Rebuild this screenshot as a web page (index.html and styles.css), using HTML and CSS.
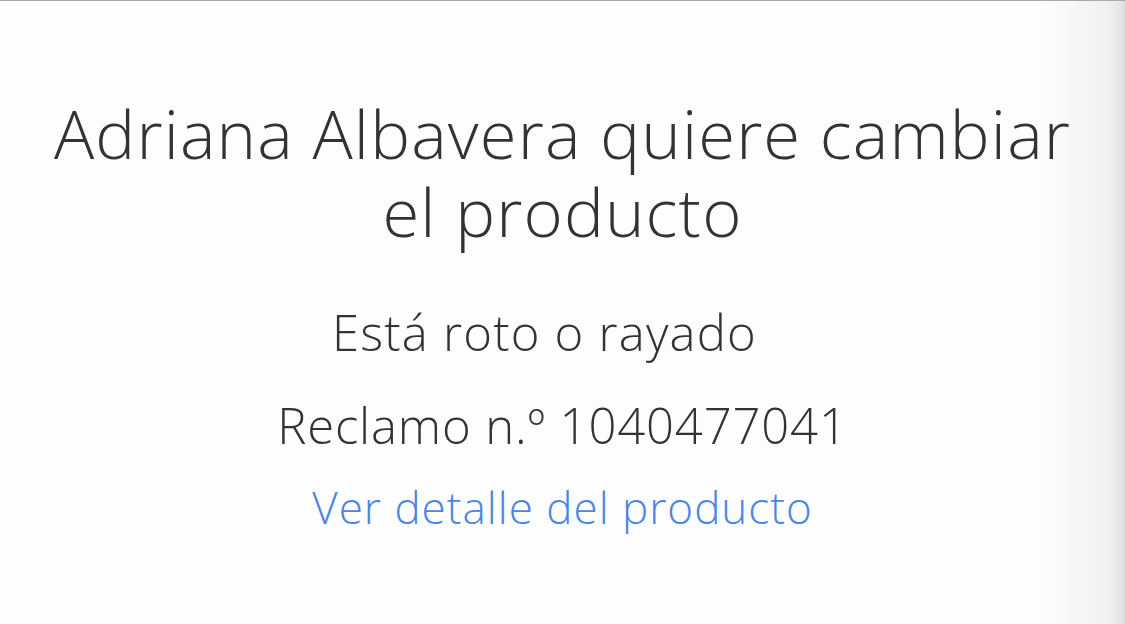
FILE: index.html
```html
<!DOCTYPE html>
<html lang="es">
<head>
    <meta charset="UTF-8">
    <meta name="viewport" content="width=device-width, initial-scale=1.0">
    <title>Cambio de producto</title>
    <link rel="stylesheet" href="styles.css">
</head>
<body>
    <div class="container">
        <h1 class="title">Adriana Albavera quiere cambiar el producto</h1>
        <p class="reason">Está roto o rayado</p>
        <p class="claim">Reclamo n.º 1040477041</p>
        <a class="detail-link" href="#">Ver detalle del producto</a>
    </div>
</body>
</html>
```

FILE: styles.css
```css
/* General Reset */
* {
    margin: 0;
    padding: 0;
    box-sizing: border-box;
}

body {
    font-family: "Open Sans", Lato, sans-serif;
    font-weight: 300;
    color: #333333;
    height: 100vh;
    overflow: hidden;
    border-top: 1px solid #a9a9a9;
    /* soft shade along the right edge */
    background: linear-gradient(to right, #fdfdfd 0%, #fdfdfd 92.5%, #f1f1f1 98.5%, #e4e4e4 99.6%, #dcdcdc 100%);
}

.container {
    display: flex;
    flex-direction: column;
    align-items: center;
    text-align: center;
    padding-top: 93px;
}

.title {
    font-size: 67px;
    font-weight: 300;
    line-height: 78px;
    letter-spacing: 1.15px;
    width: 1045px;
}

.reason {
    font-size: 49px;
    line-height: 60px;
    letter-spacing: 1.2px;
    margin-top: 52px;
    padding-right: 36px;
}

.claim {
    font-size: 49px;
    line-height: 60px;
    letter-spacing: 0.85px;
    margin-top: 33px;
}

.detail-link {
    font-size: 44px;
    line-height: 56px;
    letter-spacing: 1px;
    margin-top: 24px;
    color: #4a86e2;
    text-decoration: none;
}
```
